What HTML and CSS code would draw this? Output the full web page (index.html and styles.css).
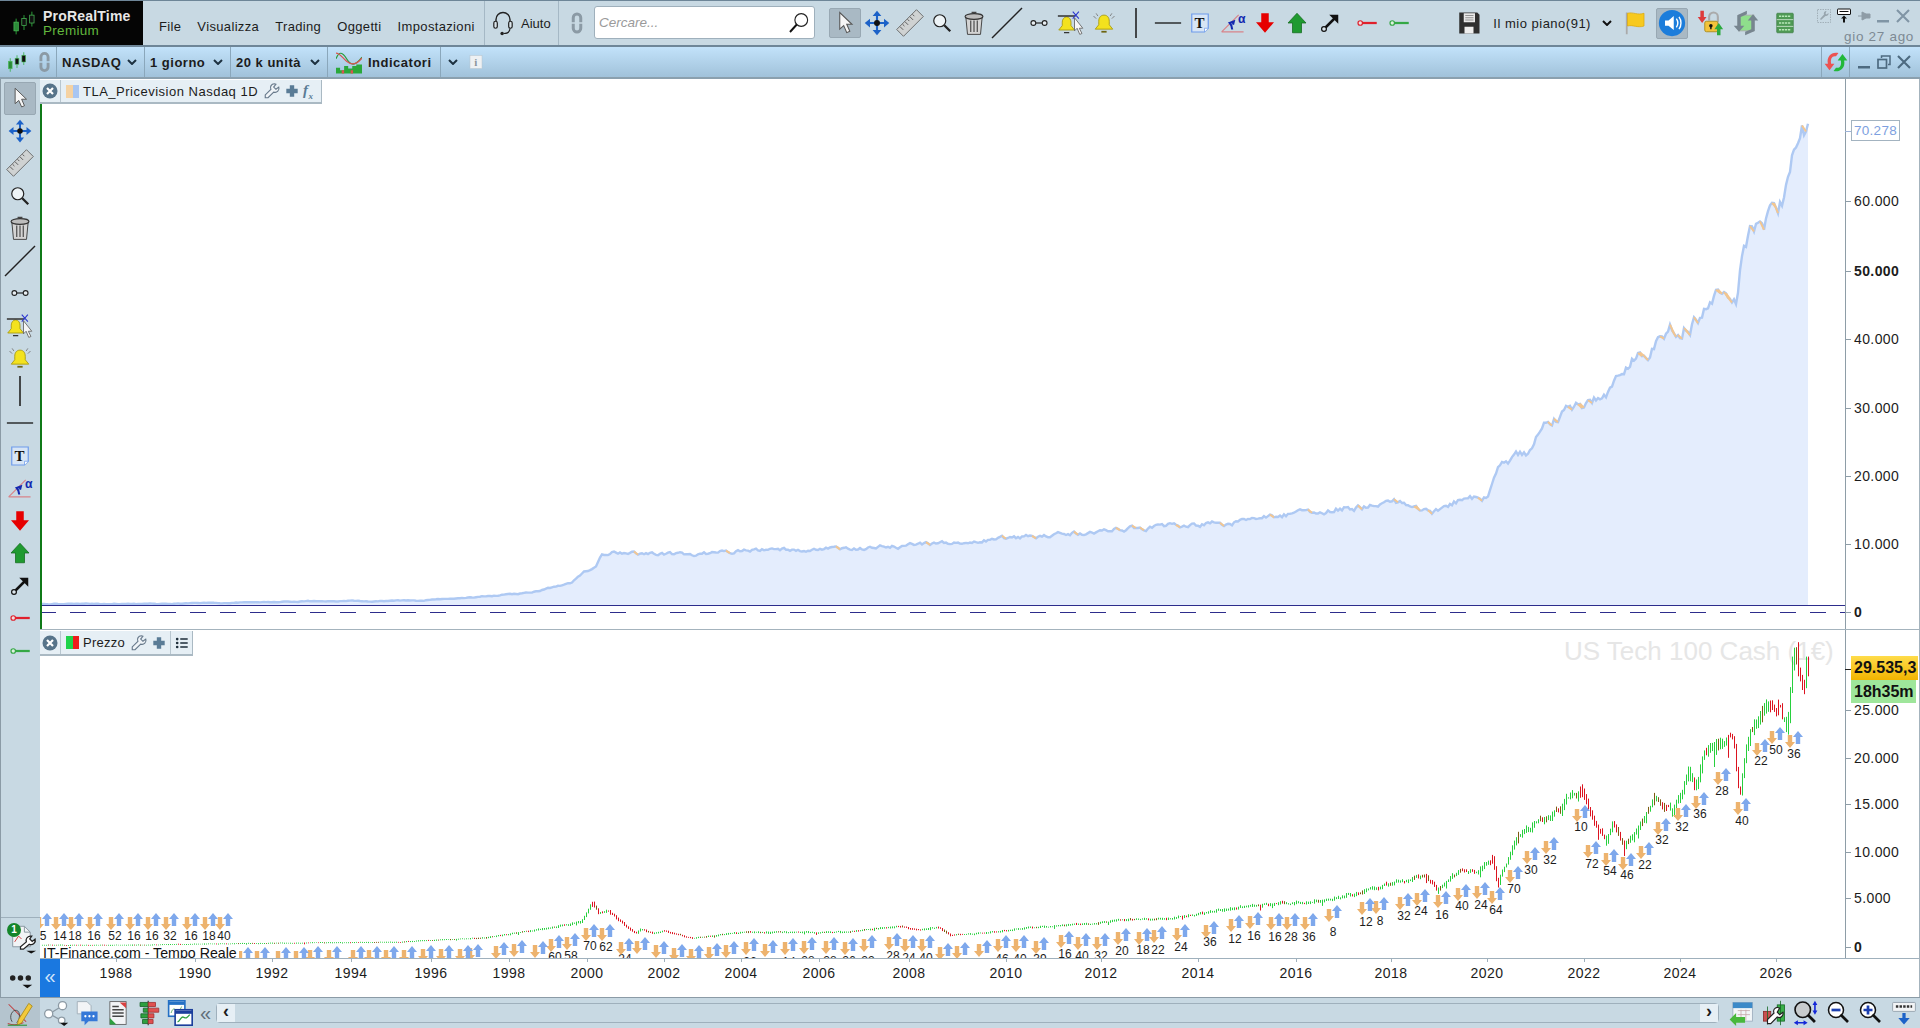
FILE: index.html
```html
<!DOCTYPE html>
<html lang="en">
<head>
    <meta charset="UTF-8">
    <meta name="viewport" content="width=device-width, initial-scale=1.0">
    <title>ProRealTime Premium</title>
    <link rel="stylesheet" href="styles.css">
</head>
<body>
    <svg class="icon-defs" width="0" height="0">
        <defs>
            <symbol id="i-candles" viewBox="0 0 32 32">
                <path d="M7 11v18M16 7v17M25 3v17" stroke="#2fae3e" stroke-width="1"/>
                <rect x="4.500" y="15" width="5" height="10" fill="#2c8a38" stroke="#4cc05a" stroke-width=".8"/>
                <rect x="13.500" y="11" width="5" height="8" fill="#111" stroke="#4cc05a" stroke-width=".8"/>
                <rect x="22.500" y="7" width="5" height="9" fill="#111" stroke="#4cc05a" stroke-width=".8"/>
            </symbol>
            <symbol id="i-link" viewBox="0 0 32 32">
                <path d="M9 15V9a7 7 0 0 1 14 0v6h-4V9a3 3 0 0 0-6 0v6z" fill="#8b9aa5"/>
                <path d="M9 17v6a7 7 0 0 0 14 0v-6h-4v6a3 3 0 0 1-6 0v-6z" fill="#8b9aa5"/>
            </symbol>
            <symbol id="i-cursor" viewBox="0 0 32 32">
                <path d="M10 4v19l4.500-4 3.500 8 3.500-1.500-3.500-8h6z" fill="#f6f6f6" stroke="#555" stroke-width="1.200"/>
            </symbol>
            <symbol id="i-move" viewBox="0 0 32 32">
                <path d="M16 2l-5 6h10zM16 30l-5-6h10zM2 16l6-5v10zM30 16l-6-5v10z" fill="#1c62c8"/>
                <path d="M16 6v20M6 16h20" stroke="#1c62c8" stroke-width="2.400"/>
                <circle cx="16" cy="16" r="3.400" fill="#111"/>
            </symbol>
            <symbol id="i-ruler" viewBox="0 0 32 32">
                <g transform="rotate(-45 16 16)">
                    <rect x="0" y="10.500" width="32" height="11" fill="#cfd2d2" stroke="#666"/>
                    <path d="M5 11v5M9 11v3M13 11v5M17 11v3M21 11v5M25 11v3" stroke="#555"/>
                </g>
            </symbol>
            <symbol id="i-search" viewBox="0 0 32 32">
                <circle cx="13" cy="13" r="8" fill="#eef4f7" stroke="#222" stroke-width="1.600"/>
                <path d="M19 19l8 8" stroke="#222" stroke-width="3"/>
            </symbol>
            <symbol id="i-trash" viewBox="0 0 32 32">
                <path d="M6 9l2 21h16l2-21z" fill="#d4d4d4" stroke="#444" stroke-width="1.200"/>
                <ellipse cx="16" cy="8" rx="11" ry="3.500" fill="#bdbdbd" stroke="#333" stroke-width="1.400"/>
                <path d="M13 3h6M12 13v14M16 13v14M20 13v14" stroke="#444" stroke-width="1.400"/>
            </symbol>
            <symbol id="i-line" viewBox="0 0 32 32"><path d="M1 31L31 1" stroke="#222" stroke-width="1.400"/></symbol>
            <symbol id="i-vline" viewBox="0 0 32 32"><path d="M16 1v30" stroke="#222" stroke-width="1.600"/></symbol>
            <symbol id="i-hline" viewBox="0 0 32 32"><path d="M1 16h30" stroke="#222" stroke-width="1.600"/></symbol>
            <symbol id="i-dots" viewBox="0 0 32 32">
                <path d="M12 16h8" stroke="#222" stroke-width="1.600"/>
                <circle cx="8.500" cy="16" r="3.200" fill="#e8eef2" stroke="#222" stroke-width="1.500"/>
                <circle cx="23.500" cy="16" r="3.200" fill="#e8eef2" stroke="#222" stroke-width="1.500"/>
            </symbol>
            <symbol id="i-bell" viewBox="0 0 32 32">
                <path d="M16 7c-4 0-6 3-6 7v4l-4 5h20l-4-5v-4c0-4-2-7-6-7z" fill="#f3e21e" stroke="#a89a10"/>
                <path d="M13 26h6" stroke="#6d6410" stroke-width="2"/>
                <path d="M4 8l3 3M28 8l-3 3M7 5l2 3M25 5l-2 3" stroke="#777" stroke-width="1"/>
            </symbol>
            <symbol id="i-alert" viewBox="0 0 32 32">
                <path d="M11 9c-3 0-5 3-5 6v4l-4 5h18l-4-5v-4c0-3-2-6-5-6z" fill="#f3e21e" stroke="#a89a10"/>
                <path d="M1 8h20M8 27h6" stroke="#333" stroke-width="1.600"/>
                <path d="M18 3l7 8M25 3l-7 8" stroke="#2b35d0" stroke-width="1.200"/>
                <path d="M20 10v15l3-3 3 7 2.500-1-3-6h4z" fill="#f6f6f6" stroke="#666"/>
            </symbol>
            <symbol id="i-text" viewBox="0 0 32 32">
                <path d="M5 4h22v19l-5 5H5z" fill="#d7e5f5" stroke="#6e9cec" stroke-width="1.600"/>
                <path d="M22 28v-5h5" fill="#fff" stroke="#6e9cec"/>
                <text x="15.500" y="22" class="icon-t">T</text>
            </symbol>
            <symbol id="i-angle" viewBox="0 0 32 32">
                <path d="M2 27h27M2 27L23 6" stroke="#d8848a" stroke-width="1.500" fill="none"/>
                <path d="M15 24c0-4-1-6-3-8l5-2-1 4" stroke="#1428b0" stroke-width="2.600" fill="none"/>
                <text x="22" y="16" class="icon-alpha">α</text>
            </symbol>
            <symbol id="i-down" viewBox="0 0 32 32"><path d="M11 3h10v12h7L16 29 4 15h7z" fill="#e60000"/></symbol>
            <symbol id="i-up" viewBox="0 0 32 32"><path d="M16 3l12 13h-6v13H10V16H4z" fill="#1f9a30" stroke="#136a1e"/></symbol>
            <symbol id="i-arrow" viewBox="0 0 32 32">
                <path d="M10 22L22 10" stroke="#111" stroke-width="3.400"/>
                <path d="M15 5h12v12z" fill="#111"/>
                <circle cx="8" cy="24" r="3.200" fill="#dce6ec" stroke="#111" stroke-width="1.600"/>
            </symbol>
            <symbol id="i-key-red" viewBox="0 0 32 32">
                <path d="M10 16h19" stroke="#e0202c" stroke-width="3"/>
                <circle cx="7" cy="16" r="3" fill="#f0dfe0" stroke="#e0202c" stroke-width="1.600"/>
            </symbol>
            <symbol id="i-key-green" viewBox="0 0 32 32">
                <path d="M10 16h19" stroke="#35a845" stroke-width="3"/>
                <circle cx="7" cy="16" r="3" fill="#dff0e0" stroke="#35a845" stroke-width="1.600"/>
            </symbol>
            <symbol id="i-wrench" viewBox="0 0 32 32">
                <path d="M20 3a7 7 0 0 0-6 10L4 23v5h5l10-10a7 7 0 0 0 9-9l-5 4-4-4 4-5a7 7 0 0 0-3-1z" fill="#eef3f7" stroke="#66788a" stroke-width="2"/>
            </symbol>
            <symbol id="i-plus" viewBox="0 0 32 32"><path d="M11 3h10v8h8v10h-8v8H11v-8H3V11h8z" fill="#5a7c96"/></symbol>
            <symbol id="i-close" viewBox="0 0 32 32">
                <circle cx="16" cy="16" r="15" fill="#57748a"/>
                <path d="M10 10l12 12M22 10L10 22" stroke="#fff" stroke-width="4.400"/>
            </symbol>
            <symbol id="i-list" viewBox="0 0 32 32">
                <path d="M12 7h17M12 16h17M12 25h17" stroke="#1e2e3a" stroke-width="3.400"/>
                <circle cx="5" cy="7" r="3" fill="#1e2e3a"/><circle cx="5" cy="16" r="3" fill="#1e2e3a"/><circle cx="5" cy="25" r="3" fill="#1e2e3a"/>
            </symbol>
            <symbol id="i-headset" viewBox="0 0 32 32">
                <path d="M8 18v-6a8 8 0 0 1 16 0v6" fill="none" stroke="#222" stroke-width="1.600"/>
                <rect x="5.500" y="14" width="4" height="8" rx="2" fill="#dce6ec" stroke="#222" stroke-width="1.400"/>
                <rect x="22.500" y="14" width="4" height="8" rx="2" fill="#dce6ec" stroke="#222" stroke-width="1.400"/>
                <path d="M24 22c0 4-3 6-7 6" fill="none" stroke="#222" stroke-width="1.400"/>
                <circle cx="15" cy="28" r="2" fill="#222"/>
            </symbol>
            <symbol id="i-lens" viewBox="0 0 32 32">
                <circle cx="19" cy="12" r="8.500" fill="#fff" stroke="#222" stroke-width="1.500"/>
                <path d="M13 18l-9 10" stroke="#111" stroke-width="2.600"/>
            </symbol>
            <symbol id="i-indicators" viewBox="0 0 32 32">
                <path d="M0 12c4-10 8-8 13 0s10 10 19-2" fill="none" stroke="#2a9a38" stroke-width="1.500"/>
                <path d="M0 5c5 0 8 6 13 10s11 6 19-4" fill="none" stroke="#d9534f" stroke-width="1.500"/>
                <path d="M0 30v-7h5v3h5v-5h5v3h5v-3h5v-2h7v11z" fill="#2aa83a"/>
                <path d="M7 30v-4h3v4zM18 30v-4h3v4z" fill="#d9534f"/>
            </symbol>
            <symbol id="i-info" viewBox="0 0 32 32">
                <rect x="4" y="3" width="24" height="26" fill="#eef1f3" stroke="#b8c4cc"/>
                <text x="16" y="24" class="icon-i">i</text>
            </symbol>
            <symbol id="i-refresh" viewBox="0 0 32 32">
                <path d="M6 18C4 9 11 3 19 5l-3 4c-5-1-7 3-6 9h4l-6 8-6-8z" fill="#ec5252"/>
                <path d="M26 14c2 9-5 15-13 13l3-4c5 1 7-3 6-9h-4l6-8 6 8z" fill="#22b83a"/>
            </symbol>
            <symbol id="i-floppy" viewBox="0 0 32 32">
                <path d="M3 2h24l3 3v25H3z" fill="#2f2f2f"/>
                <rect x="9" y="3" width="15" height="12" fill="#e8e8e8"/>
                <path d="M11 6h11M11 9h11M11 12h11" stroke="#777"/>
                <rect x="10" y="21" width="12" height="9" fill="#eee"/>
            </symbol>
            <symbol id="i-flag" viewBox="0 0 32 32">
                <path d="M5 2v29" stroke="#aaa" stroke-width="2.400"/>
                <path d="M6 3c7-2 14 3 22 0v17c-8 3-15-2-22 0z" fill="#f7c91e" stroke="#d9a810"/>
            </symbol>
            <symbol id="i-sound" viewBox="0 0 32 32">
                <circle cx="16" cy="16" r="15" fill="#1c7ddb"/>
                <path d="M8 13h4l6-5v16l-6-5H8z" fill="#fff"/>
                <path d="M21 11c2 3 2 7 0 10M24 9c3 4 3 10 0 14" stroke="#fff" stroke-width="1.600" fill="none"/>
            </symbol>
            <symbol id="i-lock" viewBox="0 0 32 32">
                <path d="M15 13V9a5 5 0 0 1 10 0v6" fill="none" stroke="#aaa" stroke-width="2.400"/>
                <rect x="10" y="14" width="15" height="12" rx="2" fill="#f3c33a" stroke="#a88a1a"/>
                <circle cx="17" cy="19" r="2" fill="#111"/><path d="M17 20v3" stroke="#111" stroke-width="1.600"/>
                <path d="M5 2h4v7h3l-5 7-5-7h3z" fill="#dd3b3b"/>
                <path d="M26 16l5 7h-3v7h-4v-7h-3z" fill="#2caa3f"/>
            </symbol>
            <symbol id="i-sync" viewBox="0 0 32 32">
                <rect x="8" y="7" width="17" height="18" fill="#8fdf8c" stroke="#aaa"/>
                <path d="M17 2L6 7v12H2l6 7 6-7h-4V9l7-3z" fill="#77858f"/>
                <path d="M15 30l11-5V13h4l-6-7-6 7h4v10l-7 3z" fill="#77858f"/>
            </symbol>
            <symbol id="i-server" viewBox="0 0 32 32">
                <rect x="5" y="3" width="22" height="26" rx="1" fill="#4f9a55" stroke="#3e7d44"/>
                <path d="M5 11.500h22M5 20.500h22" stroke="#dfeee0"/>
                <path d="M8 7h16M8 16h16M8 25h16" stroke="#b8e8b8" stroke-width="2" stroke-dasharray="3 1"/>
            </symbol>
            <symbol id="i-tool-off" viewBox="0 0 32 32">
                <rect x="3" y="3" width="26" height="26" fill="none" stroke="#98a6af" stroke-width="1.600" stroke-dasharray="3 2"/>
                <path d="M21 6a5 5 0 0 0-5 7L8 22l2 2 9-8a5 5 0 0 0 6-6l-4 3-2-2z" fill="#98a6af"/>
            </symbol>
            <symbol id="i-kb-up" viewBox="0 0 32 32">
                <rect x="3" y="2" width="26" height="11" rx="1" fill="#fff" stroke="#111" stroke-width="2"/>
                <path d="M7 7h18" stroke="#111" stroke-width="2"/>
                <path d="M16 15l6 6h-4v8h-4v-8h-4z" fill="#111"/>
            </symbol>
            <symbol id="i-pin" viewBox="0 0 32 32"><path d="M4 16h8M12 8l8 4h8v8h-8l-8 4z" fill="#8e9ca6" stroke="#8e9ca6" stroke-width="2"/></symbol>
            <symbol id="i-min" viewBox="0 0 32 32"><rect x="4" y="24" width="24" height="5" fill="#8095a5"/></symbol>
            <symbol id="i-min-dark" viewBox="0 0 32 32"><rect x="4" y="24" width="24" height="5" fill="#4d6a80"/></symbol>
            <symbol id="i-restore" viewBox="0 0 32 32">
                <rect x="4" y="11" width="17" height="17" fill="none" stroke="#4d6a80" stroke-width="3.400"/>
                <path d="M11 8V4h17v17h-4" fill="none" stroke="#4d6a80" stroke-width="3"/>
            </symbol>
            <symbol id="i-x" viewBox="0 0 32 32"><path d="M4 4l24 24M28 4L4 28" stroke="#8095a5" stroke-width="4.200"/></symbol>
            <symbol id="i-x-dark" viewBox="0 0 32 32"><path d="M4 4l24 24M28 4L4 28" stroke="#4d6a80" stroke-width="4.200"/></symbol>
            <symbol id="i-settings" viewBox="0 0 40 40">
                <path d="M12 8h12l6 6v15H12z" fill="#f2f4f6" stroke="#8a98a2"/>
                <path d="M24 8v6h6" fill="none" stroke="#8a98a2"/>
                <path d="M14 24l4-6 3 3" stroke="#d04040" fill="none"/>
                <path d="M30 18a4.500 4.500 0 0 0-4 6l-6 5v2.500h3l6-5a4.500 4.500 0 0 0 6-5.500l-3 2.500-2.500-2.500 2-3z" fill="#fff" stroke="#222" stroke-width="1.300"/>
                <path d="M26 33h10l-5 3z" fill="#111"/>
            </symbol>
            <symbol id="i-more" viewBox="0 0 40 40">
                <circle cx="12" cy="20" r="2.800" fill="#222"/><circle cx="20" cy="20" r="2.800" fill="#222"/><circle cx="28" cy="20" r="2.800" fill="#222"/>
                <path d="M22 27h10l-5 3.500z" fill="#111"/>
            </symbol>
            <symbol id="i-pen" viewBox="0 0 32 32">
                <path d="M3 6l20 20M2 28c8 3 14 1 18-1" stroke="#c04040" stroke-width="1.200" fill="none"/>
                <path d="M7 26c-4-6 0-14 5-13s4 12 0 14" stroke="#444" fill="none"/>
                <path d="M14 24L26 5l4 3-12 19-5 3z" fill="#f3c93a" stroke="#a88a1a"/>
                <path d="M2 30h22" stroke="#3a9a48" stroke-width="1.400"/>
            </symbol>
            <symbol id="i-share" viewBox="0 0 32 32">
                <path d="M8 17L24 7M8 17l16 9" stroke="#8c9aa4" stroke-width="1.600"/>
                <circle cx="7" cy="17" r="5" fill="#fff" stroke="#8c9aa4" stroke-width="1.600"/>
                <circle cx="24" cy="7" r="5" fill="#fff" stroke="#8c9aa4" stroke-width="1.600"/>
                <circle cx="23" cy="25" r="4" fill="#fff" stroke="#8c9aa4" stroke-width="1.600"/>
                <path d="M21 28h10l-5 4z" fill="#111"/>
            </symbol>
            <symbol id="i-chat" viewBox="0 0 32 32">
                <path d="M4 2h12l5 5v10H4z" fill="#f2f4f6" stroke="#9aa8b2"/>
                <path d="M9 14h20v12H18l-5 5v-5H9z" fill="#3578d8"/>
                <circle cx="14" cy="20" r="1.400" fill="#fff"/><circle cx="19" cy="20" r="1.400" fill="#fff"/><circle cx="24" cy="20" r="1.400" fill="#fff"/>
            </symbol>
            <symbol id="i-news" viewBox="0 0 32 32">
                <rect x="6" y="2" width="20" height="28" fill="#f2f4f6" stroke="#555"/>
                <path d="M9 8h8M9 12h14M9 16h14M9 20h14" stroke="#444" stroke-width="1.600"/>
                <path d="M18 3h8v7z" fill="#d84040"/><path d="M6 30v-8l8 8z" fill="#2ea040"/>
            </symbol>
            <symbol id="i-book" viewBox="0 0 32 32">
                <path d="M15 1v30" stroke="#333" stroke-width="1.400"/>
                <path d="M5 3h10v5H5zM9 10h6v5H9zM6 17h9v5H6zM8 24h7v5H8z" fill="#2ea040" stroke="#17652a"/>
                <path d="M15 3h9v5h-9zM15 10h13v5H15zM15 17h7v5h-7zM15 24h6v5h-6z" fill="#e05050" stroke="#a03030"/>
            </symbol>
            <symbol id="i-windows" viewBox="0 0 32 32">
                <rect x="2" y="1" width="20" height="19" fill="#fff" stroke="#2470c4" stroke-width="2"/>
                <path d="M2 2h20v4H2z" fill="#2470c4"/>
                <path d="M5 16c2-6 4-6 6-3s4 2 7-5" stroke="#44a050" fill="none"/>
                <rect x="10" y="12" width="21" height="19" fill="#fff" stroke="#1c3f9c" stroke-width="2"/>
                <path d="M10 13h21v4H10z" fill="#1c3f9c"/>
                <path d="M13 27c3-1 4-7 7-6s3 3 8-3" stroke="#30a040" stroke-width="1.600" fill="none"/>
            </symbol>
            <symbol id="i-calendar" viewBox="0 0 32 32">
                <rect x="6" y="3" width="24" height="23" fill="#f2f6f8" stroke="#9ab"/>
                <path d="M6 3h24v7H6z" fill="#3c8ac8"/>
                <path d="M12 13h15M12 18h15M16 12v13M22 12v13" stroke="#c8a8a8"/>
                <path d="M2 24l8-8v5h11v7H10v4z" fill="#48b83c"/>
            </symbol>
            <symbol id="i-candle-tool" viewBox="0 0 32 32">
                <rect x="3" y="14" width="9" height="12" fill="#c85050" stroke="#8a2a2a"/>
                <rect x="20" y="6" width="9" height="20" fill="#38b048" stroke="#186a26"/>
                <path d="M24 1v30M8 8v22" stroke="#186a26"/>
                <path d="M20 9a5 5 0 0 0-4 7l-8 8v5h4l8-8a5 5 0 0 0 7-6l-4 3-3-3 3-5z" fill="#fff" stroke="#222" stroke-width="1.400"/>
            </symbol>
            <symbol id="i-zoom-fit" viewBox="0 0 32 32">
                <circle cx="12" cy="12" r="9.500" fill="#c8ccce" stroke="#111" stroke-width="2"/>
                <path d="M18 18l9 9" stroke="#111" stroke-width="3.400"/>
                <path d="M27 1l3 5h-2v7h2l-3 5-3-5h2V6h-2zM1 28l5-3v2h7v-2l5 3-5 3v-2H6v2z" fill="#1428d8"/>
            </symbol>
            <symbol id="i-zoom-out" viewBox="0 0 32 32">
                <circle cx="12" cy="12" r="10" fill="#fff" stroke="#111" stroke-width="2"/>
                <path d="M18 18l10 10" stroke="#111" stroke-width="3.600"/>
                <path d="M6 12h12" stroke="#1c3fb0" stroke-width="3.600"/>
            </symbol>
            <symbol id="i-zoom-in" viewBox="0 0 32 32">
                <circle cx="12" cy="12" r="10" fill="#fff" stroke="#111" stroke-width="2"/>
                <path d="M18 18l10 10" stroke="#111" stroke-width="3.600"/>
                <path d="M6 12h12M12 6v12" stroke="#1c3fb0" stroke-width="3.600"/>
            </symbol>
            <symbol id="i-panel-down" viewBox="0 0 32 32">
                <rect x="2" y="3" width="28" height="11" rx="1" fill="#f2f4f6" stroke="#8a98a2"/>
                <path d="M6 8h20" stroke="#333" stroke-width="3" stroke-dasharray="3 1.500"/>
                <path d="M14 16h4v6h5l-7 8-7-8h5z" fill="#1c62c8"/>
            </symbol>
        </defs>
    </svg>

    <div class="topbar">
        <div class="logo">
            <svg class="logo-mark"><use href="#i-candles"/></svg>
            <div class="logo-text">
                <div class="logo-name">ProRealTime</div>
                <div class="logo-plan">Premium</div>
            </div>
        </div>
        <div class="menu">
            <span>File</span><span>Visualizza</span><span>Trading</span><span>Oggetti</span><span>Impostazioni</span>
        </div>
        <div class="help">
            <svg class="ic-28"><use href="#i-headset"/></svg>
            <span>Aiuto</span>
        </div>
        <div class="link-box"><svg class="ic-24"><use href="#i-link"/></svg></div>
        <div class="search">
            <span>Cercare...</span>
            <svg class="ic-24"><use href="#i-lens"/></svg>
        </div>
        <div class="tools">
            <div class="tool active"><svg class="ic-28"><use href="#i-cursor"/></svg></div>
            <div class="tool"><svg class="ic-28"><use href="#i-move"/></svg></div>
            <div class="tool"><svg class="ic-28"><use href="#i-ruler"/></svg></div>
            <div class="tool"><svg class="ic-24"><use href="#i-search"/></svg></div>
            <div class="tool"><svg class="ic-26"><use href="#i-trash"/></svg></div>
            <div class="tool"><svg class="ic-32"><use href="#i-line"/></svg></div>
            <div class="tool"><svg class="ic-24"><use href="#i-dots"/></svg></div>
            <div class="tool"><svg class="ic-28"><use href="#i-alert"/></svg></div>
            <div class="tool"><svg class="ic-28"><use href="#i-bell"/></svg></div>
            <div class="tool"><svg class="ic-32"><use href="#i-vline"/></svg></div>
            <div class="tool"><svg class="ic-28"><use href="#i-hline"/></svg></div>
            <div class="tool"><svg class="ic-24"><use href="#i-text"/></svg></div>
            <div class="tool"><svg class="ic-26"><use href="#i-angle"/></svg></div>
            <div class="tool"><svg class="ic-24"><use href="#i-down"/></svg></div>
            <div class="tool"><svg class="ic-24"><use href="#i-up"/></svg></div>
            <div class="tool"><svg class="ic-24"><use href="#i-arrow"/></svg></div>
            <div class="tool key"><svg class="ic-24"><use href="#i-key-red"/></svg></div>
            <div class="tool"><svg class="ic-24"><use href="#i-key-green"/></svg></div>
        </div>
        <div class="plan">
            <svg class="ic-24"><use href="#i-floppy"/></svg>
            <span>Il mio piano(91)</span>
            <svg class="chevron dark"><path d="M1 1l4 4 4-4"/></svg>
        </div>
        <div class="status">
            <div class="status-item"><svg class="ic-24"><use href="#i-flag"/></svg></div>
            <div class="status-item sound"><svg class="ic-28"><use href="#i-sound"/></svg></div>
            <div class="status-item"><svg class="ic-28"><use href="#i-lock"/></svg></div>
            <div class="status-item"><svg class="ic-28"><use href="#i-sync"/></svg></div>
            <div class="status-item server"><svg class="ic-24"><use href="#i-server"/></svg></div>
        </div>
        <div class="corner">
            <div class="corner-icons">
                <svg class="ic-16"><use href="#i-tool-off"/></svg>
                <svg class="ic-16"><use href="#i-kb-up"/></svg>
                <svg class="ic-16"><use href="#i-pin"/></svg>
                <svg class="ic-16"><use href="#i-min"/></svg>
                <svg class="ic-16"><use href="#i-x"/></svg>
            </div>
            <div class="date">gio 27 ago</div>
        </div>
    </div>

    <div class="instbar">
        <div class="inst-icon w-33"><svg class="ic-24"><use href="#i-candles"/></svg></div>
        <div class="inst-icon w-24 sep"><svg class="ic-24"><use href="#i-link"/></svg></div>
        <div class="inst-select w-88 sep"><span>NASDAQ</span><svg class="chevron"><path d="M1 1l4 4 4-4"/></svg></div>
        <div class="inst-select w-86 sep"><span>1 giorno</span><svg class="chevron"><path d="M1 1l4 4 4-4"/></svg></div>
        <div class="inst-select w-97 sep"><span>20 k unità</span><svg class="chevron"><path d="M1 1l4 4 4-4"/></svg></div>
        <div class="inst-select w-113 sep indic"><svg class="ic-26"><use href="#i-indicators"/></svg><span>Indicatori</span></div>
        <div class="inst-icon w-23"><svg class="chevron"><path d="M1 1l4 4 4-4"/></svg></div>
        <div class="inst-icon w-23"><svg class="ic-16"><use href="#i-info"/></svg></div>
        <div class="inst-right">
            <div class="inst-icon w-29 sep-both"><svg class="ic-26"><use href="#i-refresh"/></svg></div>
            <div class="win-btns">
                <svg class="ic-16"><use href="#i-min-dark"/></svg>
                <svg class="ic-16"><use href="#i-restore"/></svg>
                <svg class="ic-16"><use href="#i-x-dark"/></svg>
            </div>
        </div>
    </div>

    <div class="main">
        <div class="sidebar">
            <div class="side-tools">
                <div class="side-tool active"><svg class="ic-26"><use href="#i-cursor"/></svg></div>
                <div class="side-tool"><svg class="ic-26"><use href="#i-move"/></svg></div>
                <div class="side-tool"><svg class="ic-28"><use href="#i-ruler"/></svg></div>
                <div class="side-tool"><svg class="ic-24"><use href="#i-search"/></svg></div>
                <div class="side-tool"><svg class="ic-26"><use href="#i-trash"/></svg></div>
                <div class="side-tool"><svg class="ic-32"><use href="#i-line"/></svg></div>
                <div class="side-tool"><svg class="ic-24"><use href="#i-dots"/></svg></div>
                <div class="side-tool"><svg class="ic-28"><use href="#i-alert"/></svg></div>
                <div class="side-tool"><svg class="ic-28"><use href="#i-bell"/></svg></div>
                <div class="side-tool"><svg class="ic-32"><use href="#i-vline"/></svg></div>
                <div class="side-tool"><svg class="ic-28"><use href="#i-hline"/></svg></div>
                <div class="side-tool"><svg class="ic-24"><use href="#i-text"/></svg></div>
                <div class="side-tool"><svg class="ic-26"><use href="#i-angle"/></svg></div>
                <div class="side-tool"><svg class="ic-24"><use href="#i-down"/></svg></div>
                <div class="side-tool"><svg class="ic-24"><use href="#i-up"/></svg></div>
                <div class="side-tool"><svg class="ic-24"><use href="#i-arrow"/></svg></div>
                <div class="side-tool"><svg class="ic-24"><use href="#i-key-red"/></svg></div>
                <div class="side-tool"><svg class="ic-24"><use href="#i-key-green"/></svg></div>
            </div>
            <div class="side-foot">
                <div class="side-settings">
                    <svg class="ic-40"><use href="#i-settings"/></svg>
                    <span class="badge-1">1</span>
                </div>
                <div class="side-more"><svg class="ic-40"><use href="#i-more"/></svg></div>
            </div>
        </div>

        <div class="charts">
            <div class="pane pane-top">
                <svg id="chartTop" viewBox="40 79 1879 551"></svg>
                <div class="legend legend-top">
                    <div class="legend-close"><svg class="ic-16"><use href="#i-close"/></svg></div>
                    <span class="swatch swatch-tla"></span>
                    <span class="legend-name">TLA_Pricevision Nasdaq 1D</span>
                    <svg class="ic-18"><use href="#i-wrench"/></svg>
                    <svg class="ic-14"><use href="#i-plus"/></svg>
                    <span class="fx">f<sub>x</sub></span>
                </div>
                <div class="value-tag">70.278</div>
            </div>
            <div class="pane pane-bottom">
                <svg id="chartBottom" viewBox="40 630 1879 328"></svg>
                <div class="legend legend-bottom">
                    <div class="legend-close"><svg class="ic-16"><use href="#i-close"/></svg></div>
                    <span class="swatch swatch-price"></span>
                    <span class="legend-name">Prezzo</span>
                    <svg class="ic-18"><use href="#i-wrench"/></svg>
                    <svg class="ic-14"><use href="#i-plus"/></svg>
                    <div class="legend-list"><svg class="ic-14"><use href="#i-list"/></svg></div>
                </div>
                <div class="price-tag">29.535,3</div>
                <div class="time-tag">18h35m</div>
            </div>
            <div class="time-axis">
                <div class="collapse">«</div>
                <svg id="chartTime" viewBox="60 959 1859 38"></svg>
            </div>
        </div>
    </div>

    <div class="bottombar">
        <div class="pen"><svg class="ic-28"><use href="#i-pen"/></svg></div>
        <div class="bottom-tool"><svg class="ic-26"><use href="#i-share"/></svg></div>
        <div class="bottom-tool"><svg class="ic-26"><use href="#i-chat"/></svg></div>
        <div class="bottom-tool"><svg class="ic-26"><use href="#i-news"/></svg></div>
        <div class="bottom-tool"><svg class="ic-26"><use href="#i-book"/></svg></div>
        <div class="bottom-tool"><svg class="ic-26"><use href="#i-windows"/></svg></div>
        <div class="more-left">«</div>
        <div class="scroller">
            <div class="scroll-btn">‹</div>
            <div class="scroll-btn">›</div>
        </div>
        <div class="bottom-right">
            <div class="bottom-tool"><svg class="ic-26"><use href="#i-calendar"/></svg></div>
            <div class="bottom-tool"><svg class="ic-26"><use href="#i-candle-tool"/></svg></div>
            <div class="bottom-tool"><svg class="ic-26"><use href="#i-zoom-fit"/></svg></div>
            <div class="bottom-tool"><svg class="ic-24"><use href="#i-zoom-out"/></svg></div>
            <div class="bottom-tool"><svg class="ic-24"><use href="#i-zoom-in"/></svg></div>
            <div class="bottom-tool"><svg class="ic-26"><use href="#i-panel-down"/></svg></div>
        </div>
    </div>

    <script src="chart.js"></script>
</body>
</html>
```

FILE: styles.css
```css
* {
    box-sizing: border-box;
}
body {
    margin: 0;
    height: 1028px;
    overflow: hidden;
    display: flex;
    flex-direction: column;
    font-family: "Liberation Sans", Arial, sans-serif;
    color: #1c1c1c;
    background-color: #c8d9e3;
}
.icon-defs {
    position: absolute;
}
.icon-t {
    font: bold 20px "Liberation Serif", serif;
    text-anchor: middle;
    fill: #111;
}
.icon-alpha {
    font: bold 15px "Liberation Sans", sans-serif;
    fill: #1428b0;
}
.icon-i {
    font: bold 22px "Liberation Serif", serif;
    text-anchor: middle;
    fill: #8a949c;
}
.ic-14 { width: 14px; height: 14px; }
.ic-16 { width: 16px; height: 16px; }
.ic-18 { width: 18px; height: 18px; }
.ic-24 { width: 24px; height: 24px; }
.ic-26 { width: 26px; height: 26px; }
.ic-28 { width: 28px; height: 28px; }
.ic-32 { width: 32px; height: 32px; }
.ic-40 { width: 40px; height: 40px; }

.chevron {
    width: 10px;
    height: 6px;
    fill: none;
    stroke: #1d3140;
    stroke-width: 2;
}
.chevron.dark {
    stroke: #111;
}

/* top bar */
.topbar {
    height: 47px;
    flex: none;
    display: flex;
    align-items: stretch;
    background-color: #c8d9e3;
    border-top: 1px solid #6e8698;
    border-bottom: 2px solid #6e8698;
}
.logo {
    width: 143px;
    flex: none;
    background-color: #050505;
    display: flex;
    align-items: center;
    padding-left: 10px;
    gap: 5px;
}
.logo-mark {
    width: 28px;
    height: 28px;
}
.logo-name {
    color: #e8e8e8;
    font-size: 14px;
    font-weight: bold;
    line-height: 15px;
    letter-spacing: 0.2px;
}
.logo-plan {
    color: #62b83e;
    font-size: 13.5px;
    line-height: 14px;
    letter-spacing: 0.3px;
}
.menu {
    width: 342px;
    flex: none;
    display: flex;
    align-items: center;
    gap: 16px;
    padding-left: 16px;
    padding-top: 7px;
    font-size: 13px;
    letter-spacing: 0.35px;
    border-right: 1px solid #a5b8c5;
}
.help {
    width: 74px;
    flex: none;
    display: flex;
    align-items: center;
    padding-left: 4px;
    gap: 4px;
    font-size: 13px;
    border-right: 1px solid #a5b8c5;
}
.link-box {
    width: 35px;
    flex: none;
    display: flex;
    align-items: center;
    justify-content: center;
}
.search {
    width: 221px;
    height: 33px;
    margin-top: 5px;
    flex: none;
    display: flex;
    align-items: center;
    justify-content: space-between;
    padding: 0 3px 0 4px;
    background: white;
    border: 1px solid #9fb0bc;
    border-radius: 3px;
    color: #9a9a9a;
    font-style: italic;
    font-size: 13.5px;
}
.tools {
    display: flex;
    align-items: center;
    margin-left: 14px;
    flex: none;
}
.tool {
    width: 32.3px;
    height: 30px;
    display: flex;
    align-items: center;
    justify-content: center;
}
.tool.active,
.side-tool.active {
    background-color: #a9b9c4;
    border: 1px solid #98a8b3;
    border-radius: 2px;
}
.tool.key {
    margin-left: 5px;
}
.plan {
    display: flex;
    align-items: center;
    margin-left: 42px;
    flex: none;
    font-size: 13px;
    letter-spacing: 0.5px;
}
.plan span {
    margin-left: 12px;
    margin-right: 11px;
}
.status {
    display: flex;
    align-items: center;
    margin-left: 5px;
    flex: none;
}
.status-item {
    width: 36px;
    height: 31px;
    display: flex;
    align-items: center;
    justify-content: center;
}
.status-item.sound {
    width: 32px;
    margin: 0 4px 0 3px;
    background-color: #a9b9c4;
    border: 1px solid #98a8b3;
    border-radius: 2px;
}
.status-item.server {
    margin-left: 3px;
}
.corner {
    margin-left: auto;
    width: 106px;
    flex: none;
    display: flex;
    flex-direction: column;
    padding-top: 5px;
}
.corner-icons {
    display: flex;
    justify-content: space-between;
    padding: 2px 9px 0 2px;
}
.date {
    margin-top: 5px;
    padding-left: 30px;
    color: #7d8a94;
    font-size: 13.5px;
    letter-spacing: 0.7px;
    white-space: nowrap;
}

/* instrument bar */
.instbar {
    height: 32px;
    flex: none;
    display: flex;
    align-items: stretch;
    background: linear-gradient(#c2e2fa, #a1c2da);
    border-bottom: 2px solid #8ba0ae;
    font-size: 13px;
    font-weight: bold;
    letter-spacing: 0.5px;
}
.inst-icon {
    display: flex;
    align-items: center;
    justify-content: center;
}
.inst-select {
    display: flex;
    align-items: center;
    justify-content: space-between;
    padding: 0 7px 0 5px;
}
.indic {
    justify-content: flex-start;
    gap: 6px;
    padding-left: 8px;
}
.sep {
    border-right: 1px solid #8aa7bb;
}
.sep-both {
    border-left: 1px solid #8aa7bb;
    border-right: 1px solid #8aa7bb;
}
.w-23 { width: 23px; }
.w-24 { width: 24px; }
.w-29 { width: 29px; }
.w-33 { width: 33px; }
.w-86 { width: 86px; }
.w-88 { width: 88px; }
.w-97 { width: 97px; }
.w-113 { width: 113px; }
.inst-right {
    margin-left: auto;
    display: flex;
}
.win-btns {
    width: 70px;
    display: flex;
    align-items: center;
    justify-content: space-between;
    padding: 0 8px 0 6px;
}

/* main area */
.main {
    height: 918px;
    flex: none;
    display: flex;
}
.sidebar {
    width: 40px;
    flex: none;
    display: flex;
    flex-direction: column;
    background-color: #c8d9e3;
    border-left: 1px solid #8b9ba6;
}
.side-tools {
    padding-top: 3px;
}
.side-tool {
    height: 32.5px;
    width: 32px;
    margin-left: 3px;
    display: flex;
    align-items: center;
    justify-content: center;
}
.side-foot {
    margin-top: auto;
}
.side-settings {
    height: 41px;
    position: relative;
    border-top: 1px solid #9fb0bc;
    display: flex;
    align-items: center;
    justify-content: center;
}
.side-more {
    height: 39px;
    display: flex;
    align-items: center;
    justify-content: center;
}
.badge-1 {
    position: absolute;
    left: 6px;
    top: 5px;
    width: 14px;
    height: 14px;
    border-radius: 50%;
    background-color: #14852a;
    color: white;
    font-size: 10px;
    font-weight: bold;
    line-height: 14px;
    text-align: center;
}
.charts {
    flex: 1;
    display: flex;
    flex-direction: column;
    background: white;
    border-right: 1px solid #a4b3bd;
}
.pane {
    position: relative;
    flex: none;
}
.pane svg,
.time-axis svg {
    display: block;
}
.pane > svg {
    width: 100%;
    height: 100%;
}
.pane-top {
    height: 551px;
}
.pane-bottom {
    height: 328px;
}
.legend {
    position: absolute;
    left: 0;
    display: flex;
    align-items: center;
    gap: 4px;
    background-color: #e6eff5;
    border-right: 1px solid #aab9c3;
    border-bottom: 2px solid #aab9c3;
    font-size: 13px;
}
.legend-top {
    top: 1px;
    width: 282px;
    height: 24px;
    letter-spacing: 0.5px;
}
.legend-bottom {
    top: 1px;
    width: 153px;
    height: 25px;
    letter-spacing: 0.25px;
}
.legend-close {
    width: 21px;
    height: 100%;
    display: flex;
    align-items: center;
    justify-content: center;
    border-right: 1px solid #b8c6cf;
}
.swatch {
    width: 13px;
    height: 13px;
    flex: none;
    margin-left: 1px;
}
.swatch-tla {
    background: linear-gradient(90deg, #f5d2a2 50%, #a8c6f2 50%);
}
.swatch-price {
    background: linear-gradient(90deg, #1fd34a 50%, #ee1c1c 50%);
}
.legend-name {
    margin-right: 1px;
}
.legend-list {
    height: 100%;
    display: flex;
    align-items: center;
    padding-left: 4px;
    border-left: 1px solid #b8c6cf;
}
.fx {
    font: italic bold 15px "Liberation Serif", serif;
    color: #5a7c96;
}
.fx sub {
    font-size: 9px;
}
.value-tag {
    position: absolute;
    left: 1811px;
    top: 41px;
    width: 49px;
    height: 21px;
    border: 1px solid #a3b3c0;
    color: #7d9fe0;
    font-size: 13.5px;
    letter-spacing: 0.3px;
    line-height: 19px;
    text-align: center;
}
.price-tag,
.time-tag {
    position: absolute;
    left: 1811px;
    font-size: 16px;
    font-weight: bold;
    line-height: 24px;
    padding-left: 3px;
    color: #111;
    white-space: nowrap;
}
.price-tag {
    top: 26px;
    width: 67px;
    height: 24px;
    background: linear-gradient(#ffdc4a, #f2b400);
}
.time-tag {
    top: 50px;
    width: 65px;
    height: 23px;
    background-color: #9fe69b;
}
.time-axis {
    height: 39px;
    flex: none;
    display: flex;
    border-top: 1px solid #9fb0bc;
}
.time-axis svg {
    width: 1859px;
    height: 38px;
}
.collapse {
    width: 20px;
    flex: none;
    background-color: #1a78e0;
    color: #cfe4fb;
    font-size: 20px;
    line-height: 34px;
    text-align: center;
}

/* bottom bar */
.bottombar {
    height: 31px;
    flex: none;
    display: flex;
    align-items: center;
    background-color: #c8d9e3;
    border-top: 1px solid #8b9ba6;
}
.pen {
    width: 40px;
    height: 100%;
    flex: none;
    display: flex;
    align-items: center;
    justify-content: center;
    background-color: #b4c4ce;
}
.bottom-tool {
    width: 31px;
    height: 100%;
    flex: none;
    display: flex;
    align-items: center;
    justify-content: center;
}
.more-left {
    width: 21px;
    flex: none;
    color: #5f6e78;
    font-size: 20px;
    line-height: 24px;
    text-align: center;
}
.scroller {
    flex: 1;
    height: 20px;
    display: flex;
    justify-content: space-between;
    border: 1px solid #9fb0bc;
    border-radius: 4px;
}
.scroll-btn {
    width: 18px;
    background-color: #e6eff5;
    font-size: 18px;
    font-weight: bold;
    line-height: 15px;
    text-align: center;
}
.bottom-right {
    display: flex;
    flex: none;
    height: 100%;
    padding-left: 6px;
    width: 201px;
}
.bottom-right .bottom-tool {
    width: 32.5px;
}
```

FILE: chart.js
```js
// screen-space points, everything here is in page pixels
const SVG_NS = 'http://www.w3.org/2000/svg';
const AXIS_X = 1845;

const equityPoints = [
    [42,604],[150,604],[270,602],[330,601],[404,601],[449,599],[530,593],[571,583],[585,572],[596,568],
    [602,556],[612,552],[643,554],[686,555],[747,550],[857,549],[980,541],[1102,530],[1224,523],[1273,515],
    [1347,508],[1400,503],[1433,513],[1467,497],[1487,497],[1497,470],[1513,457],[1527,453],[1548,420],
    [1577,407],[1607,397],[1622,367],[1640,353],[1673,330],[1690,322],[1710,302],[1737,295],[1741,253],
    [1757,227],[1777,213],[1787,193],[1797,133],[1801,131],[1808,130]
];

const pricePoints = [
    [41,945],[122,945],[265,943],[396,942],[490,937],[547,928],[580,922],[592,903],[598,913],[608,910],
    [624,925],[635,933],[640,929],[652,933],[664,931],[691,938],[742,932],[803,932],[844,932],[901,926],
    [918,930],[938,927],[950,935],[991,932],[1020,928],[1081,924],[1101,923],[1113,920],[1171,918],
    [1207,912],[1240,907],[1277,903],[1321,901],[1362,892],[1394,882],[1423,875],[1437,890],[1455,873],
    [1476,872],[1492,857],[1497,883],[1517,837],[1541,818],[1551,817],[1566,800],[1580,790],[1592,820],
    [1606,840],[1613,820],[1623,847],[1639,827],[1655,798],[1672,812],[1688,775],[1696,783],[1704,753],
    [1733,738],[1739,792],[1749,733],[1766,702],[1778,703],[1787,732],[1792,667],[1796,658],[1802,693],
    [1806,663],[1808,672]
];

// [x, arrow y, label, label y]
const signals = [
    [43,921,'5',936],[60,921,'14',936],[75,921,'18',936],[94,921,'16',936],[115,921,'52',936],
    [134,921,'16',936],[152,921,'16',936],[170,921,'32',936],[191,921,'16',936],[209,921,'18',936],[224,921,'40',936],
    [244,955,'',0],[261,955,'',0],[282,955,'',0],[300,955,'',0],[314,954,'',0],[333,954,'',0],[357,954,'',0],
    [373,954,'',0],[390,954,'',0],[408,954,'',0],[427,953,'',0],[445,953,'',0],[464,953,'',0],[474,952,'',0],
    [500,950,'',0],[518,948,'',0],[539,949,'',0],[555,943,'60',957],[571,941,'58',956],[590,932,'70',946],
    [606,932,'62',947],[625,946,'24',959],[641,945,'',0],[660,949,'',0],[678,952,'',0],[695,953,'',0],
    [713,951,'',0],[730,949,'',0],[750,946,'26',962],[769,948,'',0],[789,946,'14',962],[808,945,'28',961],
    [830,945,'28',961],[849,946,'26',961],[868,943,'22',961],[893,941,'28',956],[909,943,'24',958],[926,943,'40',958],
    [944,951,'',0],[961,950,'',0],[983,948,'',0],[1002,943,'46',959],[1020,943,'40',959],[1040,945,'39',959],
    [1065,939,'16',954],[1082,941,'40',956],[1101,941,'32',956],[1122,936,'20',951],[1143,936,'18',950],[1158,934,'22',950],
    [1181,932,'24',947],[1210,929,'36',942],[1235,923,'12',939],[1254,920,'16',936],[1275,921,'16',937],
    [1291,921,'28',937],[1309,921,'36',937],[1333,913,'8',932],[1366,906,'12',922],[1380,905,'8',921],
    [1404,901,'32',916],[1421,897,'24',911],[1442,899,'16',915],[1462,892,'40',906],[1481,890,'24',905],[1496,895,'64',910],
    [1514,874,'70',889],[1531,855,'30',870],[1550,845,'32',860],[1581,813,'10',827],[1592,849,'72',864],
    [1610,857,'54',871],[1627,861,'46',875],[1645,850,'22',865],[1662,826,'32',840],[1682,812,'32',827],
    [1700,800,'36',814],[1722,776,'28',791],[1742,806,'40',821],[1761,747,'22',761],[1776,735,'50',750],[1794,739,'36',754]
];

let seed = 20260827;
function rnd() {
    seed = (seed * 1664525 + 1013904223) % 4294967296;
    return seed / 4294967296;
}

function at(points, x) {
    for (let i = 1; i < points.length; i++) {
        if (x <= points[i][0]) {
            const [x0, y0] = points[i - 1];
            const [x1, y1] = points[i];
            return y0 + (y1 - y0) * (x - x0) / (x1 - x0);
        }
    }
    return points[points.length - 1][1];
}

function el(parent, name, attrs, text) {
    const node = document.createElementNS(SVG_NS, name);
    for (const key in attrs) node.setAttribute(key, attrs[key]);
    if (text !== undefined) node.textContent = text;
    parent.appendChild(node);
    return node;
}

function label(parent, x, y, text, size, fill, extra) {
    return el(parent, 'text', Object.assign({
        x: x, y: y, fill: fill, 'font-size': size,
        'font-family': '"Liberation Sans", Arial, sans-serif'
    }, extra || {}), text);
}

function axisTicks(svg, ticks, boldOnes) {
    ticks.forEach(t => {
        el(svg, 'line', { x1: AXIS_X, y1: t[1] + 0.5, x2: AXIS_X + 6, y2: t[1] + 0.5, stroke: '#8e9da7' });
        const bold = boldOnes.includes(t[0]) ? { 'font-weight': 'bold' } : {};
        label(svg, 1854, t[1] + 5, t[0], 14, '#1c1c1c', Object.assign({ 'letter-spacing': 0.4 }, bold));
    });
}

function drawTop() {
    const svg = document.getElementById('chartTop');
    const line = [];
    let wobble = 0;
    for (let x = 42; x <= 1808; x += 2) {
        const base = at(equityPoints, x);
        wobble = wobble * 0.72 + (rnd() - 0.5) * 1.3;
        line.push([x, base + wobble * ((605 - base) * 0.035 + 0.4)]);
    }
    const pts = line.map(p => p[0] + ',' + p[1].toFixed(1)).join(' ');
    el(svg, 'polygon', { points: '42,605 ' + pts + ' 1808,605', fill: '#e4edfd' });
    el(svg, 'polyline', { points: pts, fill: 'none', stroke: '#aec9f3', 'stroke-width': 2.4 });
    // falling stretches are drawn in the other colour
    let falling = '';
    for (let i = 2; i < line.length; i++) {
        if (line[i][1] - line[i - 2][1] > 2.4) {
            falling += 'M' + line[i - 2][0] + ' ' + line[i - 2][1].toFixed(1) + 'L' + line[i][0] + ' ' + line[i][1].toFixed(1);
        }
    }
    el(svg, 'path', { d: falling, fill: 'none', stroke: '#f3c690', 'stroke-width': 2 });

    el(svg, 'line', { x1: 41, y1: 605.5, x2: AXIS_X, y2: 605.5, stroke: '#2d2d8c' });
    el(svg, 'line', { x1: 41, y1: 612.5, x2: AXIS_X, y2: 612.5, stroke: '#2d2d8c', 'stroke-dasharray': '16 14', 'stroke-dashoffset': 1 });
    el(svg, 'rect', { x: 40, y: 103, width: 2, height: 526, fill: '#0f7a18' });

    el(svg, 'line', { x1: AXIS_X + 0.5, y1: 79, x2: AXIS_X + 0.5, y2: 630, stroke: '#8e9da7' });
    el(svg, 'line', { x1: 40, y1: 629.5, x2: 1919, y2: 629.5, stroke: '#a4b3bd' });

    axisTicks(svg, [['60.000', 201], ['50.000', 271], ['40.000', 339], ['30.000', 408], ['20.000', 476], ['10.000', 544], ['0', 612]], ['50.000', '0']);
    el(svg, 'line', { x1: AXIS_X, y1: 131.5, x2: 1851, y2: 131.5, stroke: '#9db3d8' });
}

function arrowUp(cx, y) {
    return 'M' + cx + ' ' + (y - 7) + 'l5 6h-2.800v7h-4.400v-7h-2.800z';
}
function arrowDown(cx, y) {
    return 'M' + cx + ' ' + (y + 7) + 'l5-6h-2.800v-7h-4.400v7h-2.800z';
}

function drawBottom() {
    const svg = document.getElementById('chartBottom');
    label(svg, 1564, 660, 'US Tech 100 Cash (1€)', 26, '#e6e6e6');

    el(svg, 'line', { x1: AXIS_X + 0.5, y1: 630, x2: AXIS_X + 0.5, y2: 958, stroke: '#8e9da7' });

    // candles, one path per colour keeps the node count down
    const paths = { green: '', red: '', brown: '' };
    let wobble = 0;
    let open = at(pricePoints, 41);
    for (let x = 42; x <= 1808; x += 2) {
        const base = at(pricePoints, x);
        const size = (946 - base) * 0.04 + 0.3;
        wobble = wobble * 0.5 + (rnd() - 0.5);
        const close = base + wobble * size;
        // now and then a long wick
        const spike = rnd() < 0.08 ? 2.2 : 0.7;
        const top = Math.min(open, close) - rnd() * size * 0.7;
        const bottom = Math.max(open, close) + rnd() * size * spike + 0.5;
        const slope = at(pricePoints, x + 6) - at(pricePoints, x - 6);
        let kind = close <= open ? 'green' : 'red';
        if (rnd() < 0.65) kind = slope <= 0 ? 'green' : 'red';
        if (rnd() < 0.1) kind = 'brown';
        paths[kind] += 'M' + x + '.5 ' + top.toFixed(1) + 'V' + bottom.toFixed(1);
        open = close;
    }
    el(svg, 'path', { d: paths.green, stroke: '#28d03e', fill: 'none' });
    el(svg, 'path', { d: paths.red, stroke: '#dc1420', fill: 'none' });
    el(svg, 'path', { d: paths.brown, stroke: '#7e5c12', fill: 'none' });

    let down = '';
    let up = '';
    signals.forEach(s => {
        down += arrowDown(s[0] - 4, s[1] + 2);
        up += arrowUp(s[0] + 4, s[1] - 1);
        if (s[2]) {
            label(svg, s[0], s[3] + 4, s[2], 12, '#1c1c1c', { 'text-anchor': 'middle' });
        }
    });
    el(svg, 'path', { d: down, fill: '#edb36e' });
    el(svg, 'path', { d: up, fill: '#7ea8ec' });

    el(svg, 'rect', { x: 41, y: 946, width: 198, height: 12, fill: 'white' });
    label(svg, 43, 958, 'IT-Finance.com - Tempo Reale', 14.2, '#111');

    axisTicks(svg, [['25.000', 710], ['20.000', 758], ['15.000', 804], ['10.000', 852], ['5.000', 898], ['0', 947]], ['0']);
    el(svg, 'line', { x1: AXIS_X, y1: 669.5, x2: 1851, y2: 669.5, stroke: '#222' });
}

function drawTime() {
    const svg = document.getElementById('chartTime');
    const years = [
        [1988,116],[1990,195],[1992,272],[1994,351],[1996,431],[1998,509],[2000,587],[2002,664],[2004,741],[2006,819],
        [2008,909],[2010,1006],[2012,1101],[2014,1198],[2016,1296],[2018,1391],[2020,1487],[2022,1584],[2024,1680],[2026,1776]
    ];
    years.forEach(y => {
        el(svg, 'line', { x1: y[1] + 0.5, y1: 958, x2: y[1] + 0.5, y2: 962, stroke: '#9fb0bc' });
        label(svg, y[1], 978, y[0], 14, '#1c1c1c', { 'text-anchor': 'middle', 'letter-spacing': 0.5 });
    });
}

drawTop();
drawBottom();
drawTime();
```
